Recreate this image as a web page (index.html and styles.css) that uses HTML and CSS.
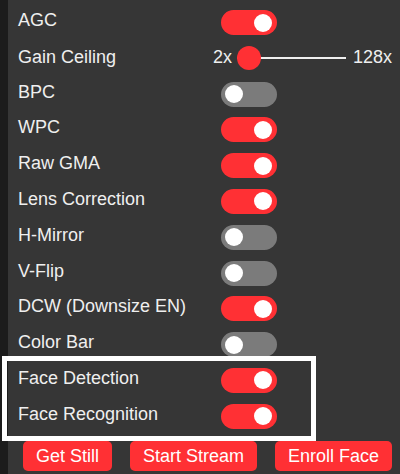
FILE: index.html
```html
<!DOCTYPE html>
<html lang="en">
<head>
  <meta charset="UTF-8" />
  <meta name="viewport" content="width=device-width, initial-scale=1.0"/>
  <title>Camera Settings</title>
  <link rel="stylesheet" href="styles.css">
</head>
<body>

  <div class="menu">
    <div class="input-group">
      <label class="name">AGC</label>
      <label class="switch"><input type="checkbox" checked><span class="slider"></span></label>
    </div>

    <div class="input-group">
      <label class="name name-range">Gain Ceiling</label>
      <div class="range">
        <span class="range-min">2x</span>
        <input type="range" min="0" max="6" value="0">
        <span class="range-max">128x</span>
      </div>
    </div>

    <div class="input-group">
      <label class="name">BPC</label>
      <label class="switch"><input type="checkbox"><span class="slider"></span></label>
    </div>

    <div class="input-group">
      <label class="name">WPC</label>
      <label class="switch"><input type="checkbox" checked><span class="slider"></span></label>
    </div>

    <div class="input-group">
      <label class="name">Raw GMA</label>
      <label class="switch"><input type="checkbox" checked><span class="slider"></span></label>
    </div>

    <div class="input-group">
      <label class="name">Lens Correction</label>
      <label class="switch"><input type="checkbox" checked><span class="slider"></span></label>
    </div>

    <div class="input-group">
      <label class="name">H-Mirror</label>
      <label class="switch"><input type="checkbox"><span class="slider"></span></label>
    </div>

    <div class="input-group">
      <label class="name">V-Flip</label>
      <label class="switch"><input type="checkbox"><span class="slider"></span></label>
    </div>

    <div class="input-group">
      <label class="name">DCW (Downsize EN)</label>
      <label class="switch"><input type="checkbox" checked><span class="slider"></span></label>
    </div>

    <div class="input-group">
      <label class="name">Color Bar</label>
      <label class="switch"><input type="checkbox"><span class="slider"></span></label>
    </div>

    <div class="input-group">
      <label class="name">Face Detection</label>
      <label class="switch"><input type="checkbox" checked><span class="slider"></span></label>
    </div>

    <div class="input-group">
      <label class="name">Face Recognition</label>
      <label class="switch"><input type="checkbox" checked><span class="slider"></span></label>
    </div>

    <section class="buttons">
      <button>Get Still</button>
      <button>Start Stream</button>
      <button>Enroll Face</button>
    </section>

    <!-- highlight box around the face options -->
    <div class="highlight"></div>
  </div>

</body>
</html>
```

FILE: styles.css
```css
body {
  font-family: "Liberation Sans", Arial, sans-serif;
  background: #1c1c1c;
  margin: 0;
  padding: 0 0 0 8px;
  height: 474px;
  overflow: hidden;
  color: #efefef;
  font-size: 18px;
}

.menu {
  position: relative;
  background: #363636;
  height: 474px;
  padding: 10px 0 0 10px;
  box-sizing: border-box;
  display: flex;
  flex-direction: column;
  gap: 10.8px;
}

.input-group {
  display: flex;
  align-items: flex-start;
  height: 25px;
}

.name {
  width: 203px;
  line-height: 20px;
  white-space: nowrap;
}

.name-range {
  width: 190px;
  padding-top: 1px;
}

.switch {
  display: block;
  position: relative;
  height: 25px;
}

.switch input {
  opacity: 0;
  width: 0;
  height: 0;
  position: absolute;
}

.slider {
  display: block;
  width: 56px;
  height: 25px;
  border-radius: 25px;
  background-color: #7b7b7b;
}

.slider:before {
  display: block;
  position: relative;
  content: "";
  border-radius: 50%;
  height: 18px;
  width: 18px;
  left: 4px;
  top: 3.5px;
  background-color: #fff;
}

input:checked + .slider {
  background-color: #ff3034;
}

input:checked + .slider:before {
  transform: translateX(29px);
}

.range {
  display: flex;
  align-items: center;
  height: 25px;
}

.range-min,
.range-max {
  padding: 0 5px;
  line-height: 20px;
  margin-top: -2px;
}

.range-max {
  padding-left: 7px;
}

input[type=range] {
  -webkit-appearance: none;
  appearance: none;
  width: 109px;
  height: 25px;
  margin: 0;
  background: transparent;
}

input[type=range]::-webkit-slider-runnable-track {
  height: 2px;
  background: #efefef;
  border: none;
}

input[type=range]::-webkit-slider-thumb {
  -webkit-appearance: none;
  width: 24px;
  height: 24px;
  border-radius: 50%;
  background: #ff3034;
  border: none;
  margin-top: -11px;
}

.buttons {
  display: flex;
  gap: 18px;
  margin: 1px 0 0 5px;
}

button {
  font-family: "Liberation Sans", Arial, sans-serif;
  font-size: 18px;
  color: #fff;
  background: #ff3034;
  border: none;
  border-radius: 5px;
  height: 30px;
  padding: 0 13px;
  line-height: 30px;
  cursor: pointer;
}

.highlight {
  position: absolute;
  left: -6px;
  top: 356px;
  width: 304px;
  height: 75px;
  border: 5px solid #fff;
  pointer-events: none;
}
```
